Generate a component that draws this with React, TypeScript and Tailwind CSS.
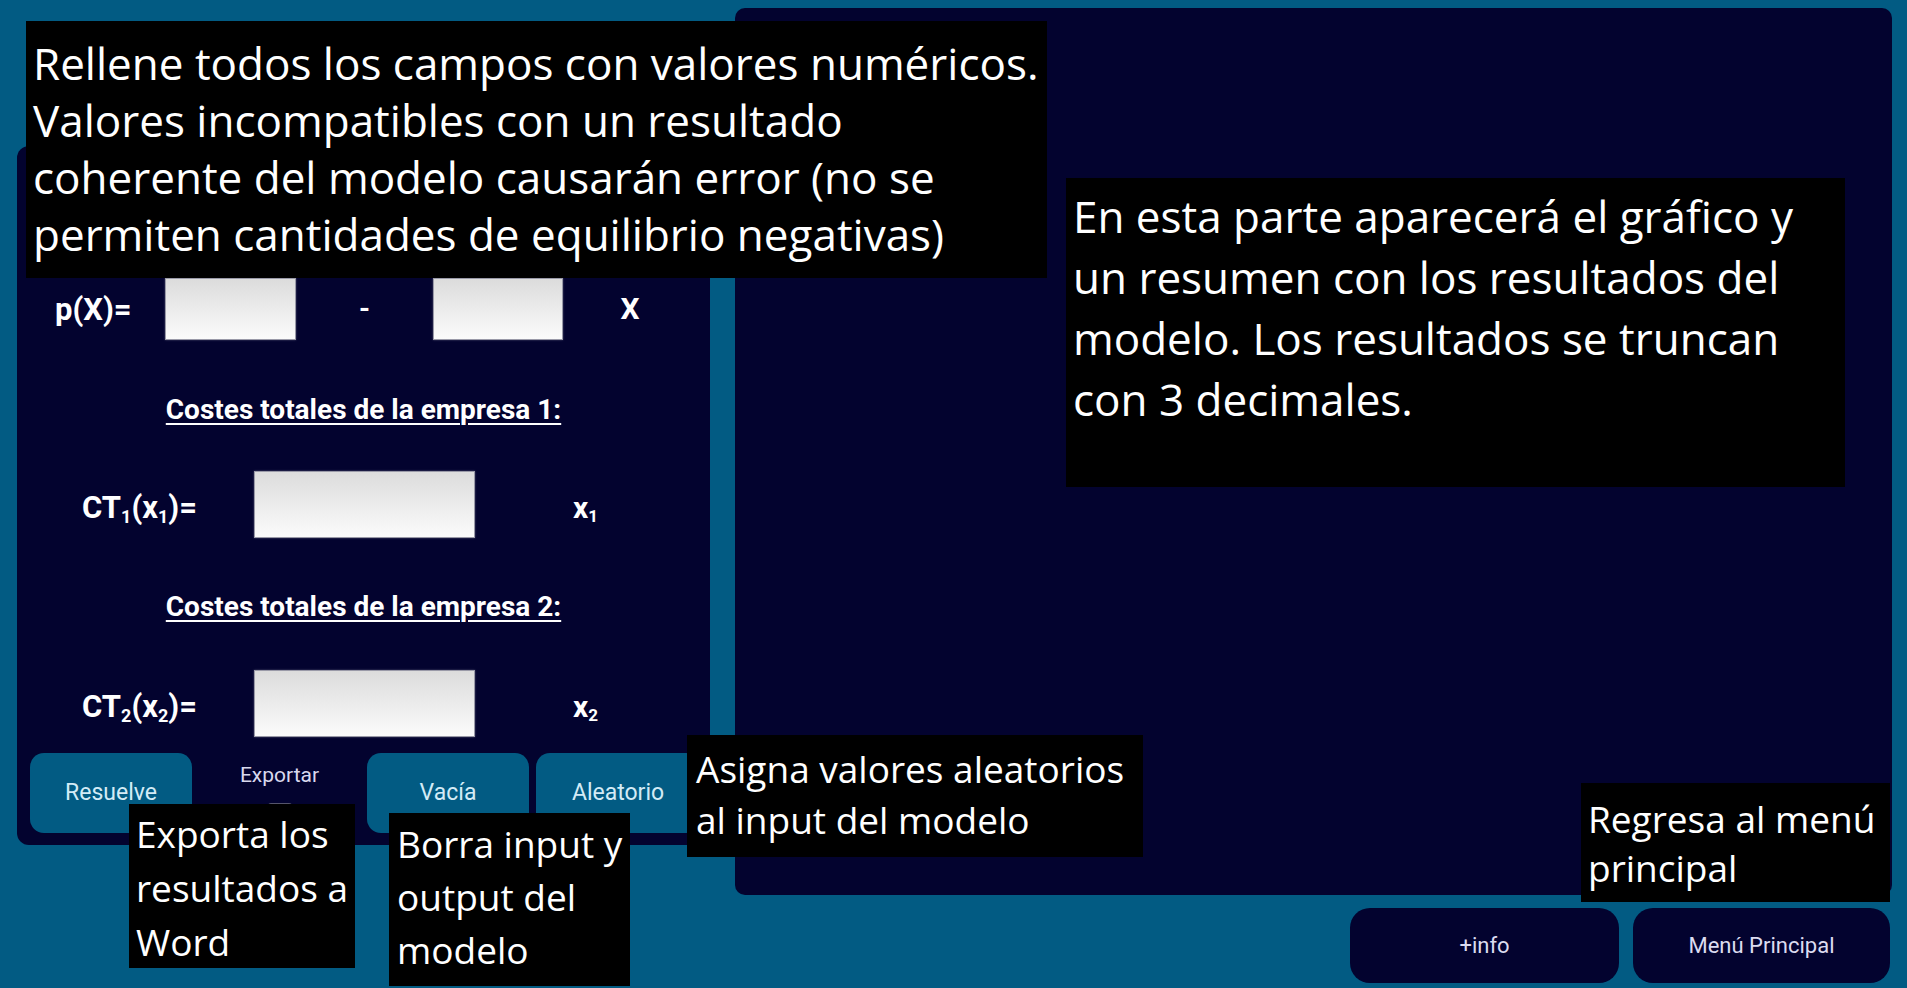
import React from "react";

const Input = ({ w, h }: { w: string; h: string }) => (
  <div
    className={`${w} ${h} border border-[#9a9aa8] bg-gradient-to-b from-[#dcdcdc] to-[#fbfbfb] shadow-[0_0_2px_rgba(255,255,255,0.3)]`}
  />
);

export default function App() {
  return (
    <div className="relative w-[1907px] h-[988px] overflow-hidden bg-[#025b83] flex font-['Roboto',sans-serif]">
      {/* Left column */}
      <div className="ml-[17px] w-[693px] pt-[146px]">
        <div className="h-[699px] rounded-[12px] bg-[#03032f] flex flex-col text-white">
          <div className="h-[132px]" />
          {/* p(X) row */}
          <div className="h-[62px] flex items-center pl-[38px]">
            <div className="w-[110px] text-[31px] font-bold leading-none">p(X)=</div>
            <Input w="w-[131px]" h="h-[62px]" />
            <div className="w-[137px] text-center text-[28px] font-bold leading-none">-</div>
            <Input w="w-[130px]" h="h-[62px]" />
            <div className="w-[134px] text-center text-[30px] font-bold leading-none">X</div>
          </div>
          {/* heading 1 */}
          <div className="h-[131px] flex items-center justify-center pt-[9px]">
            <span className="text-[28px] font-bold underline underline-offset-[4px] decoration-[2px]">
              Costes totales de la empresa 1:
            </span>
          </div>
          {/* CT1 row */}
          <div className="h-[67px] flex items-center pl-[65px]">
            <div className="w-[172px] text-[31px] font-bold leading-none pt-[6px]">
              CT<sub className="text-[18px]">1</sub>(x<sub className="text-[18px]">1</sub>)=
            </div>
            <Input w="w-[221px]" h="h-[67px]" />
            <div className="ml-[98px] text-[30px] font-bold leading-none pt-[6px]">
              x<sub className="text-[17px]">1</sub>
            </div>
          </div>
          {/* heading 2 */}
          <div className="h-[132px] flex items-center justify-center pt-[6px]">
            <span className="text-[28px] font-bold underline underline-offset-[4px] decoration-[2px]">
              Costes totales de la empresa 2:
            </span>
          </div>
          {/* CT2 row */}
          <div className="h-[67px] flex items-center pl-[65px]">
            <div className="w-[172px] text-[31px] font-bold leading-none pt-[6px]">
              CT<sub className="text-[18px]">2</sub>(x<sub className="text-[18px]">2</sub>)=
            </div>
            <Input w="w-[221px]" h="h-[67px]" />
            <div className="ml-[98px] text-[30px] font-bold leading-none pt-[6px]">
              x<sub className="text-[17px]">2</sub>
            </div>
          </div>
          {/* Buttons row */}
          <div className="mt-[16px] h-[80px] flex pl-[13px]">
            <button className="w-[162px] h-[80px] rounded-[14px] bg-[#025b83] text-[#d3ebf6] text-[23px]">
              Resuelve
            </button>
            <div className="w-[175px] h-[80px] flex flex-col items-center">
              <div className="mt-[8px] text-[21px] text-[#d9d9ee] leading-[28px]">Exportar</div>
              <div className="mt-[14px] w-[24px] h-[20px] rounded-[3px] bg-[#55556a]" />
            </div>
            <button className="w-[162px] h-[80px] rounded-[14px] bg-[#025b83] text-[#d3ebf6] text-[23px]">
              Vacía
            </button>
            <button className="ml-[7px] w-[164px] h-[80px] rounded-[14px] bg-[#025b83] text-[#d3ebf6] text-[23px]">
              Aleatorio
            </button>
          </div>
        </div>
      </div>

      {/* Right column */}
      <div className="ml-[25px] w-[1157px] pt-[8px] flex flex-col">
        <div className="h-[887px] rounded-[10px] bg-[#03032f]" />
        <div className="mt-[13px] flex justify-end gap-[14px] pr-[2px]">
          <button className="w-[269px] h-[75px] rounded-[20px] bg-[#03032f] text-[#dcdcf0] text-[22px]">
            +info
          </button>
          <button className="w-[257px] h-[75px] rounded-[20px] bg-[#03032f] text-[#dcdcf0] text-[22px]">
            Menú Principal
          </button>
        </div>
      </div>

      {/* Tooltips (overlays) */}
      <div className="absolute left-[26px] top-[21px] w-[1021px] h-[257px] bg-black text-white font-['Open_Sans',sans-serif] text-[44px] leading-[57px] pl-[7px] pt-[14px] whitespace-nowrap">
        Rellene todos los campos con valores numéricos.
        <br />
        Valores incompatibles con un resultado
        <br />
        coherente del modelo causarán error (no se
        <br />
        permiten cantidades de equilibrio negativas)
      </div>

      <div className="absolute left-[1066px] top-[178px] w-[779px] h-[309px] bg-black text-white font-['Open_Sans',sans-serif] text-[44px] leading-[61px] pl-[7px] pt-[8px] whitespace-nowrap">
        En esta parte aparecerá el gráfico y
        <br />
        un resumen con los resultados del
        <br />
        modelo. Los resultados se truncan
        <br />
        con 3 decimales.
      </div>

      <div className="absolute left-[129px] top-[804px] w-[226px] h-[164px] bg-black text-white font-['Open_Sans',sans-serif] text-[37px] leading-[54px] pl-[7px] pt-[3px] whitespace-nowrap">
        Exporta los
        <br />
        resultados a
        <br />
        Word
      </div>

      <div className="absolute left-[389px] top-[813px] w-[241px] h-[173px] bg-black text-white font-['Open_Sans',sans-serif] text-[37px] leading-[53px] pl-[8px] pt-[4px] whitespace-nowrap">
        Borra input y
        <br />
        output del
        <br />
        modelo
      </div>

      <div className="absolute left-[687px] top-[735px] w-[456px] h-[122px] bg-black text-white font-['Open_Sans',sans-serif] text-[37px] leading-[51px] pl-[9px] pt-[8px] whitespace-nowrap">
        Asigna valores aleatorios
        <br />
        al input del modelo
      </div>

      <div className="absolute left-[1581px] top-[783px] w-[309px] h-[119px] bg-black text-white font-['Open_Sans',sans-serif] text-[37px] leading-[49px] pl-[7px] pt-[11px] whitespace-nowrap">
        Regresa al menú
        <br />
        principal
      </div>
    </div>
  );
}
